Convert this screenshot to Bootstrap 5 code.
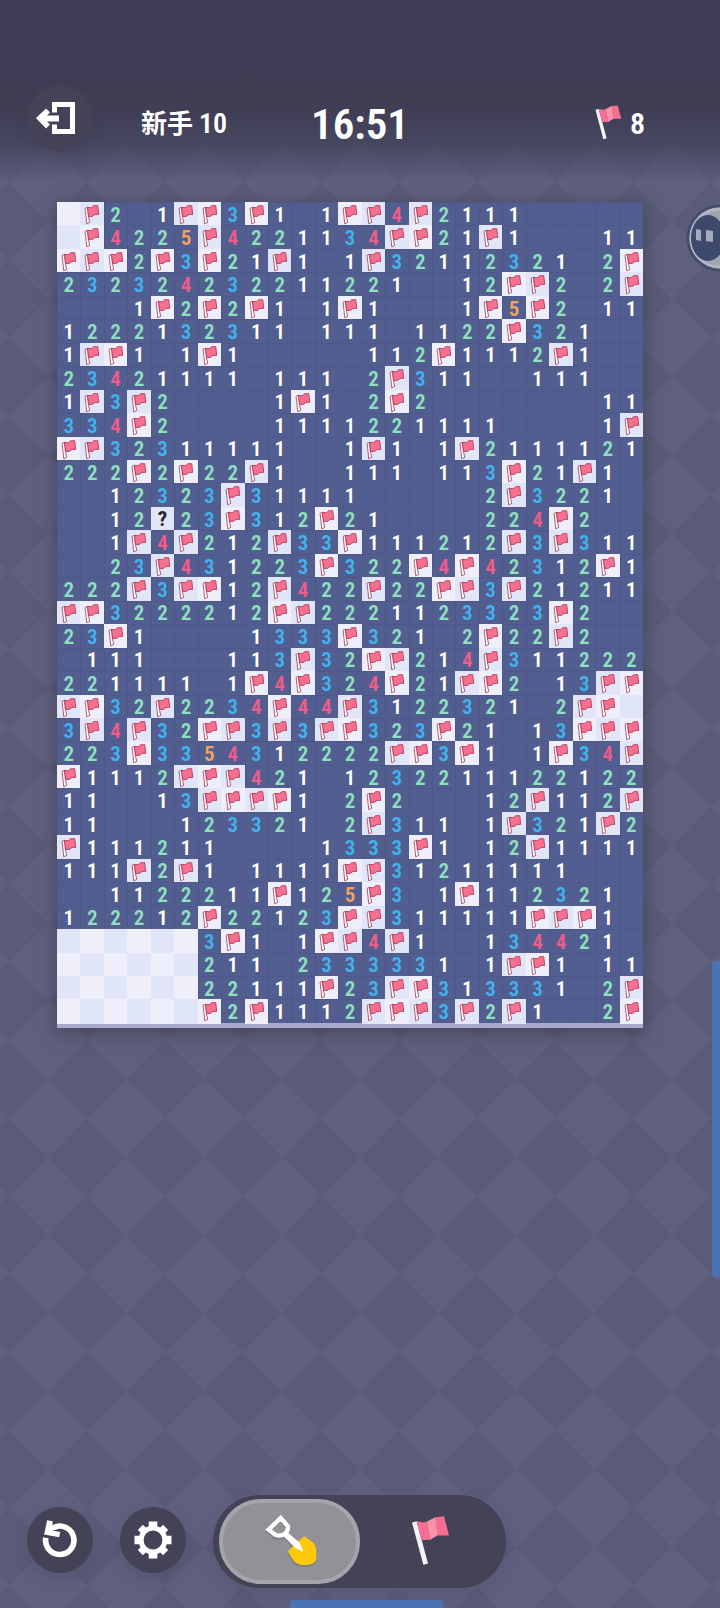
<!DOCTYPE html>
<html lang="zh-CN">
<head>
<meta charset="utf-8">
<meta name="viewport" content="width=device-width, initial-scale=1">
<title>新手 10</title>
<link href="https://cdn.jsdelivr.net/npm/bootstrap@5.3.0/dist/css/bootstrap.min.css" rel="stylesheet">
<style>
  body {
    font-family: "Roboto Condensed", Roboto, "Noto Sans CJK SC", sans-serif;
    color: #fff;
    background: repeating-conic-gradient(from 45deg, #5a5b78 0 25%, #5f607e 0 50%) 9px 26px / 78px 78px;
  }
  .topbar {
    display: grid;
    grid-template-columns: 1fr auto 1fr;
    padding: 85px 27px 51px;
    background: linear-gradient(#3e3c54 0, #3f3e55 110px, #44435ce6 140px, #4d4c6800 182px);
  }
  .level-name, .flags-left, .clock { padding-top: 12px; font-weight: 600; }
  .level-name { font-size: 26px; line-height: 28px; font-weight: 700; }
  .flags-left { font-size: 30px; line-height: 28px; }
  .level-name b { font-size: 28px; font-weight: 600; }
  .clock { font-size: 43px; line-height: 44px; }
  .round-btn {
    width: 66px; height: 66px; padding: 0; border: 0; border-radius: 50%;
    background: #434256; box-shadow: 0 6px 14px #3d3c5540;
  }
  .round-btn.ghost { background: #434257; }
  .board-wrap { padding: 0 77px 0 57px; }
  .board {
    display: grid;
    grid-template-columns: repeat(25, 1fr);
    border-bottom: 5px solid #a7abcb;
    background: #525e90;
    box-shadow: 0 4px 16px 2px #3c3b4c99;
  }
  .tile {
    display: flex; align-items: center; justify-content: center;
    aspect-ratio: 1; min-width: 0; padding: 2px 0 0; border: 0;
    font-size: 21px; line-height: 20px; font-weight: 600;
    box-shadow: inset 1px 1px 0 #4c588c;
    overflow: hidden;
  }
  .tile svg { width: 100%; height: 100%; }
  .closed { padding: 0; background: #eeeffb; box-shadow: 0 1px 0 #eeeffb; color: #23252e; font-weight: 700; }
  .closed.odd { background: #e0e5f8; box-shadow: 0 1px 0 #e0e5f8; }
  .n2 { color: #8fe0c0; }
  .n3 { color: #3fb4ee; }
  .n4 { color: #ee5c8c; }
  .n5 { color: #f3a45c; }
  .toolbar { gap: 27px; padding: 0 27px 20px; }
  .mode-switch { width: 293px; height: 93px; padding: 4px 6px; border-radius: 47px; background: #434256; box-shadow: 0 6px 16px #3d3c5533; }
  .mode-option { flex: 1 1 0; border-radius: 42px; border: 4px solid transparent; cursor: pointer; }
  .btn-check:checked + .mode-option { background: #929197; border-color: #a5a4aa; }
  .assistant { position: absolute; right: 0; top: 204px; width: 34px; height: 68px; padding: 0; border: 0; background: none; }
  .edge-right { position: absolute; right: 0; top: 961px; width: 8px; height: 316px; border-radius: 4px 0 0 4px; background: #4b72b2; }
  .edge-bottom { position: absolute; left: 50%; bottom: 0; width: 153px; height: 8px; margin-left: -70px; border-radius: 4px 4px 0 0; background: #4b72b2; }
</style>
</head>
<body class="position-relative min-vh-100 d-flex flex-column overflow-x-hidden">
<svg width="0" height="0" class="position-absolute" aria-hidden="true">
  <symbol id="flag" viewBox="0 0 120 155">
    <path fill="#f4f4f8" d="M6 25l14-4 34 127-14 4z"/>
    <path fill="#f66f93" d="M20 21l18 4 14-3 9 55-27 1zM76 9l26-3 15 58-35 0z"/>
    <path fill="#fb91ab" d="M51 22L76 9l7 54-22 14z"/>
  </symbol>
  <symbol id="mini-flag" viewBox="0 0 70 70">
    <path fill="#fff" stroke="#a34058" stroke-width="2.5" d="M15 19l8-3 2 26 4 19-9 4-2-22z"/>
    <path fill="#f7708f" stroke="#b23355" stroke-width="2.5" stroke-linejoin="round" d="M22 16l12 1 7-6 12 0 3 26-11 0-8 6-11 0z"/>
  </symbol>
</svg>

<header class="topbar align-items-center">
  <div class="d-flex align-items-center">
    <button class="round-btn ghost me-5 d-flex align-items-center justify-content-center" type="button" aria-label="退出">
      <svg class="me-2" width="40" height="34" viewBox="35 102 40 33" fill="none"><path stroke="#fff" stroke-width="5" d="M53.500 113V105H71.500V132H53.500V125"/><path fill="#fff" d="M35 118.500L45 109l4 4-3 3h12v6H46l3 3-4 4z"/></svg>
    </button>
    <div class="level-name text-nowrap">新手 <b>10</b></div>
  </div>
  <div class="clock">16:51</div>
  <div class="d-flex align-items-center justify-content-end gap-2 pe-5">
    <svg class="mt-2" width="28" height="36" aria-hidden="true"><use href="#flag"/></svg>
    <span class="flags-left">8</span>
  </div>
</header>

<main class="board-wrap">
  <div class="board" id="board"></div>
</main>

<footer class="toolbar mt-auto d-flex align-items-center">
  <button class="round-btn mb-1 d-flex align-items-center justify-content-center" type="button" aria-label="重来">
    <svg width="66" height="66" viewBox="80 76 200 200" fill="none"><path stroke="#fff" stroke-width="17" d="M137 169A43 43 0 1 0 161 138"/><path fill="#fff" d="M141 116l17 3-1 13 22-6-4 17-18 4 24 5-4 16-45-9z"/></svg>
  </button>
  <button class="round-btn mb-1 d-flex align-items-center justify-content-center" type="button" aria-label="设置">
    <svg width="66" height="66" viewBox="-100 -100 200 200" fill="#fff"><circle r="36" fill="none" stroke="#fff" stroke-width="15"/><path d="M-13-56h26v20h-26zM-13 36h26v20h-26zM-56-13v26h20v-26zM36-13v26h20v-26z"/><path transform="rotate(45)" d="M-11-54h22v20h-22zM-11 34h22v20h-22zM-54-11v22h20v-22zM34-11v22h20v-22z"/></svg>
  </button>
  <div class="mode-switch d-flex" role="radiogroup" aria-label="模式">
    <input class="btn-check" type="radio" name="mode" id="mode-dig" checked>
    <label class="mode-option d-flex align-items-center justify-content-center" for="mode-dig" aria-label="挖开">
      <svg class="ms-1 mb-1" width="54" height="54" viewBox="795 98 162 162"><g fill="none" stroke="#6f6e76" opacity=".45" transform="translate(-1 6)"><path stroke-width="12" d="M845 112l-36 36 19 17c16 6 39-2 41-28z"/><path stroke-width="12" d="M858 164l46 42"/><path fill="#6f6e76" d="M915 168l22 15q15 10 15 30v22q-3 18-30 19-24 2-38-13l-18-28z"/></g><path fill="#ffc80a" d="M915 168l22 15q15 10 15 30v22q-3 18-30 19-24 2-38-13l-18-28z"/><path fill="none" stroke="#fff" stroke-width="13" d="M845 113l-36 35 21 16c20 6 38-4 37-26z"/><path fill="#fff" d="M855 169l12-12 36 31 10 27-24-13z"/></svg>
    </label>
    <input class="btn-check" type="radio" name="mode" id="mode-flag">
    <label class="mode-option d-flex align-items-center justify-content-center" for="mode-flag" aria-label="插旗">
      <svg class="mb-1" width="40" height="52"><use href="#flag"/></svg>
    </label>
  </div>
</footer>

<button class="assistant" type="button" aria-label="助手">
  <svg class="d-block" width="34" height="68" viewBox="0 0 34 68"><circle cx="34" cy="34" r="32" fill="#a3a4b1" stroke="#444c70" stroke-width="3"/><path d="M34 5A29 29 0 0 0 34 63" fill="none" stroke="#b5b5bf" stroke-width="3"/><ellipse cx="22" cy="34" rx="17" ry="23" fill="#3d4a6c"/><path fill="#a4aabc" d="M10 25l5 1v11l-5-1zM20 26l7 1v11l-7-1z"/></svg>
</button>
<div class="edge-right"></div>
<div class="edge-bottom"></div>

<script src="https://cdn.jsdelivr.net/npm/bootstrap@5.3.0/dist/js/bootstrap.bundle.min.js"></script>
<script>
  // F = flag, # = closed, ? = question mark, . = open without neighbours
  const rows = [
    "#F2.1FF3F1.1F" + "F4F2111.....",
    "#F4225F422113" + "4FF21F1...11",
    "FFF2F3F21F1.1" + "F32112321.2F",
    "2323242322112" + "21..12FF2.2F",
    "...1F2F2F1.1F" + "1...1F5F2.11",
    "1222132311.11" + "1.1122F321..",
    "1FF1.1F1....." + "112F1112F1..",
    "23421111.111." + "2F311..111..",
    "1F3F2....1F1." + "2F2.......11",
    "334F2....1111" + "221111....1F",
    "FF32311111..1" + "F1.1F2111121",
    "222F2F22F1..1" + "11.113F21F1.",
    "..12323F31111" + ".....2F3221.",
    "..12?23F312F2" + "1....224F2..",
    "..1F4F212F33F" + "111212F3F311",
    "..23F431223F3" + "22F4F42312F1",
    "222F3FF12F422" + "F22FF3F21211",
    "FF3222212FF22" + "21123323F2..",
    "23F1....1333F" + "321.2F22F2..",
    ".111...113F32" + "FF214F311222",
    "221111.1F4F32" + "4F21FF2.13FF",
    "FF32F2234F44F" + "3122321.2FF#",
    "3F4F32FF3F3FF" + "323F21.13FFF",
    "223F335431222" + "2FF3F1.1F34F",
    "F1112FFF421.1" + "232211122122",
    "11..13FFFF1.2" + "F2...12F112F",
    "11...123321.2" + "F311.1F321F2",
    "F111211....13" + "33F1.12F1111",
    "111F2F1.1111F" + "F31211111...",
    "..1122211F125" + "F3.1F112321.",
    "122212F22123F" + "F311111FFF1.",
    "######3F1.1FF" + "4F1..134421.",
    "######211.233" + "3331.1FF1.11",
    "######22111F2" + "3FF313331.2F",
    "######F2F1112" + "FFF3F2F1..2F"
  ];
  const flag = '<svg aria-hidden="true"><use href="#mini-flag"/></svg>';
  document.getElementById("board").innerHTML = rows.map((row, y) =>
    [...row].map((c, x) => {
      const odd = (x + y) % 2 ? " odd" : "";
      if (c === "F") return `<button type="button" class="tile closed${odd}" aria-label="旗">${flag}</button>`;
      if (c === "#") return `<button type="button" class="tile closed${odd}" aria-label="未开"></button>`;
      if (c === "?") return `<button type="button" class="tile closed${odd}">?</button>`;
      return `<span class="tile n${c === "." ? 0 : c}">${c === "." ? "" : c}</span>`;
    }).join("")
  ).join("");
</script>
</body>
</html>
